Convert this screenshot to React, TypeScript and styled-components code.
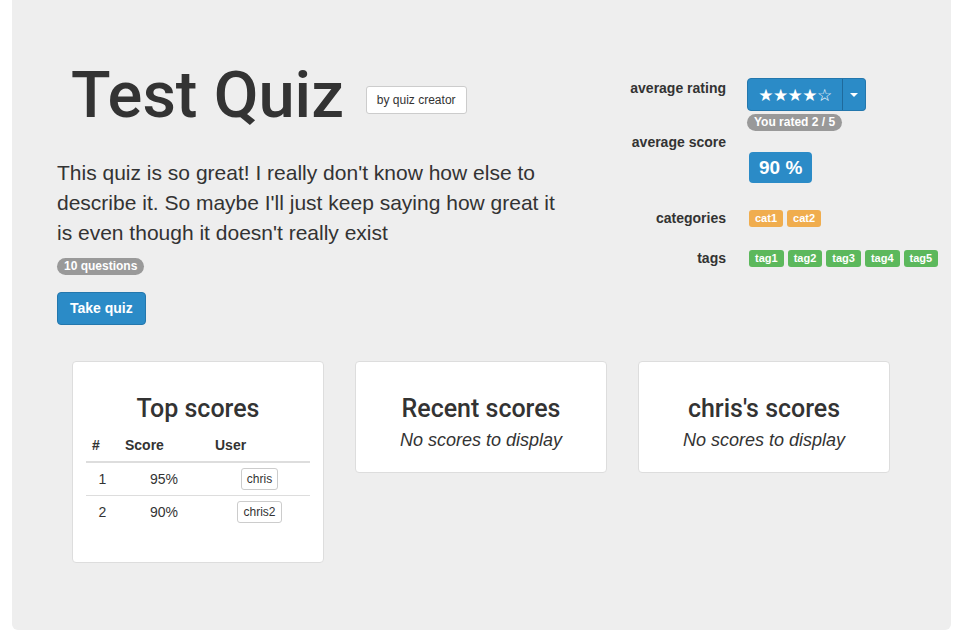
import React from "react";
import styled, { createGlobalStyle } from "styled-components";

const GlobalStyle = createGlobalStyle`
  html, body {
    margin: 0;
    padding: 0;
    background: #ffffff;
  }
  body {
    font-family: "Liberation Sans", Arial, "DejaVu Sans", sans-serif;
    color: #333333;
    font-size: 14px;
  }
  * { box-sizing: border-box; }
`;

const BLUE = "#2b8bc7";
const BLUE_DARK = "#2377ad";

const Jumbotron = styled.div`
  margin-left: 12px;
  width: 939px;
  height: 630px;
  background: #eeeeee;
  border-radius: 0 0 6px 6px;
  padding-left: 45px;
  display: flex;
  flex-direction: column;
`;

const Top = styled.div`
  display: flex;
`;

const LeftCol = styled.div`
  width: 510px;
  display: flex;
  flex-direction: column;
  align-items: flex-start;
`;

const TitleRow = styled.div`
  margin-top: 60px;
  margin-left: 14px;
  display: flex;
  align-items: center;
  gap: 22px;
`;

const Title = styled.h1`
  margin: 0;
  font-family: Roboto, "Liberation Sans", sans-serif;
  font-size: 65px;
  line-height: 70px;
  font-weight: 500;
  color: #333333;
`;

const AuthorButton = styled.button`
  margin-top: 10px;
  font-family: inherit;
  font-size: 12px;
  line-height: 18px;
  padding: 4px 10px;
  border: 1px solid #cccccc;
  border-radius: 3px;
  background: #ffffff;
  color: #333333;
`;

const Description = styled.p`
  margin: 28px 0 0;
  font-size: 21px;
  line-height: 30px;
  color: #333333;
`;

const Pill = styled.span`
  display: inline-block;
  background: #999999;
  color: #ffffff;
  font-size: 12px;
  font-weight: 700;
  line-height: 12px;
  padding: 2px 7px 3px;
  border-radius: 10px;
  white-space: nowrap;
`;

const QuestionsPill = styled(Pill)`
  margin-top: 10px;
`;

const PrimaryButton = styled.button`
  margin-top: 17px;
  font-family: inherit;
  font-size: 14px;
  font-weight: 700;
  line-height: 19px;
  padding: 6px 12px;
  border: 1px solid ${BLUE_DARK};
  border-radius: 4px;
  background: ${BLUE};
  color: #ffffff;
`;

const RightCol = styled.div`
  width: 339px;
  margin-left: auto;
  display: flex;
  flex-direction: column;
`;

const Field = styled.div<{ $gap: number }>`
  display: grid;
  grid-template-columns: 114px 1fr;
  column-gap: 21px;
  align-items: start;
  margin-top: ${(p) => p.$gap}px;
`;

const FieldLabel = styled.div<{ $offset?: number }>`
  text-align: right;
  font-size: 14px;
  font-weight: 700;
  line-height: 18px;
  margin-top: ${(p) => p.$offset ?? 0}px;
`;

const FieldValue = styled.div<{ $offset?: number; $indent?: number }>`
  display: flex;
  flex-direction: column;
  align-items: flex-start;
  margin-top: ${(p) => p.$offset ?? 0}px;
  padding-left: ${(p) => p.$indent ?? 0}px;
`;

const SplitButton = styled.div`
  display: flex;
  height: 33px;
`;

const RatingMain = styled.div`
  width: 96px;
  display: flex;
  align-items: center;
  justify-content: center;
  background: ${BLUE};
  border: 1px solid ${BLUE_DARK};
  border-radius: 4px 0 0 4px;
  color: #ffffff;
  font-family: "DejaVu Sans", sans-serif;
  font-size: 17px;
  letter-spacing: -0.5px;
`;

const RatingCaret = styled.div`
  width: 24px;
  display: flex;
  align-items: center;
  justify-content: center;
  background: ${BLUE};
  border: 1px solid ${BLUE_DARK};
  border-left-color: #1f6a9c;
  margin-left: -1px;
  border-radius: 0 4px 4px 0;
`;

const Caret = styled.span`
  width: 0;
  height: 0;
  border-top: 4px solid #ffffff;
  border-left: 4px solid transparent;
  border-right: 4px solid transparent;
`;

const RatedPill = styled(Pill)`
  margin-top: 3px;
`;

const ScoreBox = styled.span`
  display: inline-block;
  background: ${BLUE};
  color: #ffffff;
  font-size: 19px;
  font-weight: 700;
  line-height: 19px;
  padding: 6px 10px;
  border-radius: 4px;
  white-space: nowrap;
`;

const ChipRow = styled.div`
  display: flex;
  gap: 4px;
`;

const Chip = styled.span<{ $color: string }>`
  display: inline-block;
  background: ${(p) => p.$color};
  color: #ffffff;
  font-size: 11px;
  font-weight: 700;
  line-height: 12px;
  padding: 2px 6px 3px;
  border-radius: 3px;
`;

const Panels = styled.div`
  margin-top: 36px;
  margin-left: 15px;
  display: flex;
  gap: 31px;
  align-items: flex-start;
`;

const Panel = styled.div`
  width: 252px;
  background: #ffffff;
  border: 1px solid #dddddd;
  border-radius: 4px;
  padding: 33px 13px 20px;
  text-align: center;
`;

const PanelTitle = styled.h3`
  margin: 0;
  font-family: Roboto, "Liberation Sans", sans-serif;
  font-size: 25px;
  line-height: 28px;
  font-weight: 500;
  color: #333333;
`;

const Empty = styled.div`
  margin-top: 5px;
  font-size: 18px;
  line-height: 24px;
  font-style: italic;
`;

const Table = styled.table`
  margin: 3px 0 14px;
  width: 100%;
  border-collapse: collapse;
  font-size: 14px;
`;

const Th = styled.th<{ $w?: number }>`
  text-align: left;
  font-weight: 700;
  line-height: 19px;
  padding: 10px 6px 6px;
  border-bottom: 2px solid #dddddd;
  width: ${(p) => (p.$w ? `${p.$w}px` : "auto")};
`;

const Td = styled.td`
  text-align: center;
  line-height: 22px;
  height: 33px;
  padding: 0 6px;
  border-top: 1px solid #dddddd;
  vertical-align: middle;
`;

const UserButton = styled.button`
  display: inline-block;
  font-family: inherit;
  font-size: 12px;
  line-height: 18px;
  padding: 1px 5px;
  border: 1px solid #cccccc;
  border-radius: 3px;
  background: #ffffff;
  color: #333333;
  vertical-align: middle;
`;

const topScores = [
  { rank: 1, score: "95%", user: "chris" },
  { rank: 2, score: "90%", user: "chris2" },
];

export default function App() {
  return (
    <>
      <GlobalStyle />
      <Jumbotron>
        <Top>
          <LeftCol>
            <TitleRow>
              <Title>Test Quiz</Title>
              <AuthorButton>by quiz creator</AuthorButton>
            </TitleRow>
            <Description>
              This quiz is so great! I really don't know how else to describe it. So maybe I'll just
              keep saying how great it is even though it doesn't really exist
            </Description>
            <QuestionsPill>10 questions</QuestionsPill>
            <PrimaryButton>Take quiz</PrimaryButton>
          </LeftCol>
          <RightCol>
            <Field $gap={78}>
              <FieldLabel $offset={1}>average rating</FieldLabel>
              <FieldValue>
                <SplitButton>
                  <RatingMain>★★★★☆</RatingMain>
                  <RatingCaret>
                    <Caret />
                  </RatingCaret>
                </SplitButton>
                <RatedPill>You rated 2 / 5</RatedPill>
              </FieldValue>
            </Field>
            <Field $gap={2}>
              <FieldLabel>average score</FieldLabel>
              <FieldValue $offset={19} $indent={2}>
                <ScoreBox>90 %</ScoreBox>
              </FieldValue>
            </Field>
            <Field $gap={26}>
              <FieldLabel>categories</FieldLabel>
              <FieldValue $offset={1} $indent={2}>
                <ChipRow>
                  {["cat1", "cat2"].map((c) => (
                    <Chip key={c} $color="#f0ad4e">
                      {c}
                    </Chip>
                  ))}
                </ChipRow>
              </FieldValue>
            </Field>
            <Field $gap={22}>
              <FieldLabel>tags</FieldLabel>
              <FieldValue $offset={1} $indent={2}>
                <ChipRow>
                  {["tag1", "tag2", "tag3", "tag4", "tag5"].map((t) => (
                    <Chip key={t} $color="#5cb85c">
                      {t}
                    </Chip>
                  ))}
                </ChipRow>
              </FieldValue>
            </Field>
          </RightCol>
        </Top>
        <Panels>
          <Panel>
            <PanelTitle>Top scores</PanelTitle>
            <Table>
              <thead>
                <tr>
                  <Th $w={33}>#</Th>
                  <Th $w={90}>Score</Th>
                  <Th>User</Th>
                </tr>
              </thead>
              <tbody>
                {topScores.map((r) => (
                  <tr key={r.rank}>
                    <Td>{r.rank}</Td>
                    <Td>{r.score}</Td>
                    <Td>
                      <UserButton>{r.user}</UserButton>
                    </Td>
                  </tr>
                ))}
              </tbody>
            </Table>
          </Panel>
          <Panel>
            <PanelTitle>Recent scores</PanelTitle>
            <Empty>No scores to display</Empty>
          </Panel>
          <Panel>
            <PanelTitle>chris's scores</PanelTitle>
            <Empty>No scores to display</Empty>
          </Panel>
        </Panels>
      </Jumbotron>
    </>
  );
}
